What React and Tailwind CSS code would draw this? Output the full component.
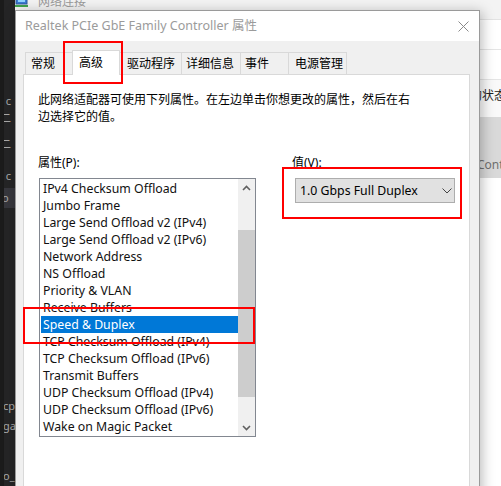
import React from "react";

const items = [
  "IPv4 Checksum Offload",
  "Jumbo Frame",
  "Large Send Offload v2 (IPv4)",
  "Large Send Offload v2 (IPv6)",
  "Network Address",
  "NS Offload",
  "Priority & VLAN",
  "Receive Buffers",
  "Speed & Duplex",
  "TCP Checksum Offload (IPv4)",
  "TCP Checksum Offload (IPv6)",
  "Transmit Buffers",
  "UDP Checksum Offload (IPv4)",
  "UDP Checksum Offload (IPv6)",
  "Wake on Magic Packet",
];

function Chevron({ up, className }) {
  return (
    <svg width="9" height="6" viewBox="0 0 9 6" className={className}>
      <path
        d={up ? "M1 5 L4.5 1.5 L8 5" : "M1 1 L4.5 4.5 L8 1"}
        fill="none"
        stroke="currentColor"
        strokeWidth="1.6"
      />
    </svg>
  );
}

function EditorStrip() {
  return (
    <div className="absolute left-0 top-0 h-full w-[15px] flex bg-[#252526] overflow-hidden">
      <div className="w-[4px] h-full bg-[#1b1b1b] shrink-0" />
      <div className="flex flex-col w-[11px] text-[11px] leading-[17px] text-[#a8a8a8] whitespace-nowrap overflow-hidden">
        <div className="h-[92px] shrink-0" />
        <div className="h-[17px] -ml-[4px]">. c</div>
        <div className="h-[17px] -ml-[4px]">二</div>
        <div className="h-[9px] shrink-0" />
        <div className="h-[17px] -ml-[4px]">二</div>
        <div className="h-[15px] shrink-0" />
        <div className="h-[17px] -ml-[4px]">. c</div>
        <div className="h-[4px] shrink-0" />
        <div className="h-[20px] -ml-[4px] bg-[#37373d] leading-[20px] w-[15px] pl-[2px]">o</div>
        <div className="h-[189px] shrink-0" />
        <div className="h-[17px] -ml-[1px]">cp</div>
        <div className="h-[3px] shrink-0" />
        <div className="h-[17px] -ml-[1px]">ga</div>
        <div className="h-[33px] shrink-0" />
        <div className="h-[17px] -ml-[1px]">o_</div>
      </div>
    </div>
  );
}

function BackWindow() {
  return (
    <div className="absolute left-[13px] top-[-14px] right-0 bottom-0 bg-white flex flex-col text-[12px]">
      <div className="h-[34px] shrink-0 bg-[#f3f3f3] border-b border-[#e3e3e3] flex items-start pt-[8px] pl-[2px] gap-[10px]">
        <svg width="13" height="12" viewBox="0 0 13 12" className="mt-[2px]">
          <rect x="1" y="1" width="11" height="7" fill="#3a7bd5" stroke="#2a5a9a" />
          <rect x="3" y="3" width="7" height="3" fill="#8fd3ff" />
          <rect x="0" y="9" width="13" height="2" fill="#3fa34d" />
        </svg>
        <span className="leading-[16px] text-[#9a9a9a]">网络连接</span>
      </div>
      <div className="h-[30px] shrink-0 border-b border-[#e5e5e5]" />
      <div className="h-[30px] shrink-0 border-b border-[#e5e5e5]" />
      <div className="h-[37px] shrink-0 bg-[#f9f9f9] pl-[457px] pt-[8px] leading-[16px] text-[#222] whitespace-nowrap">
        的状态
      </div>
      <div className="h-[61px] shrink-0 bg-[#d9d9d9] pl-[464px] pt-[40px] leading-[16px] text-[#707070] whitespace-nowrap">
        Cont
      </div>
      <div className="flex-1 bg-white" />
    </div>
  );
}

function Tab({ w, pl, selected, noLeft, right, children }) {
  if (selected) {
    return (
      <div
        className="relative z-10 h-[25px] -mb-px bg-white border-l border-t border-r border-[#d9d9d9] pt-[3px] leading-[17px] shrink-0"
        style={{ width: w, paddingLeft: pl }}
      >
        {children}
      </div>
    );
  }
  return (
    <div
      className={
        "h-[22px] bg-[#f0f0f0] border-t border-[#d9d9d9] pt-[2px] leading-[17px] shrink-0 " +
        (noLeft ? "" : "border-l ") +
        (right ? "border-r" : "")
      }
      style={{ width: w, paddingLeft: pl }}
    >
      {children}
    </div>
  );
}

function Dialog() {
  return (
    <div className="absolute left-[15px] top-[10px] w-[465px] h-[500px] border border-[#9a9a9a] bg-[#f0f0f0] flex flex-col shadow-[2px_2px_12px_rgba(0,0,0,0.28)]">
      <div className="h-[30px] shrink-0 bg-white flex items-center justify-between pl-[9px] pr-[10px]">
        <span className="text-[12.5px] text-[#9b9b9b] leading-[16px]">
          Realtek PCIe GbE Family Controller 属性
        </span>
        <svg width="11" height="11" viewBox="0 0 11 11">
          <path d="M0.5 0.5 L10.5 10.5 M10.5 0.5 L0.5 10.5" stroke="#8a8a8a" strokeWidth="1" fill="none" />
        </svg>
      </div>
      <div className="flex-1 flex flex-col pt-[9px] pl-[7px]">
        <div className="flex items-end h-[24px] ml-[2px] text-[12px] text-black">
          <Tab w={47} pl={5}>常规</Tab>
          <Tab w={48} pl={6} selected>高级</Tab>
          <Tab w={61} pl={7} noLeft>驱动程序</Tab>
          <Tab w={59} pl={4}>详细信息</Tab>
          <Tab w={48} pl={4}>事件</Tab>
          <Tab w={59} pl={6} right>电源管理</Tab>
        </div>
        <div className="w-[447px] flex-1 bg-white border border-[#d9d9d9] pl-[14px] pt-[16px] text-[12px] text-black">
          <p className="leading-[17px]">
            此网络适配器可使用下列属性。在左边单击你想更改的属性，然后在右
            <br />
            边选择它的值。
          </p>
          <div className="flex mt-[29px]">
            <div className="w-[218px] shrink-0 flex flex-col">
              <div className="leading-[17px] h-[17px]">属性(P):</div>
              <div className="ml-[1px] mt-[7px] w-[217px] h-[259px] border border-[#828790] flex">
                <div className="flex-1 flex flex-col pl-px pt-px text-[12.3px]">
                  {items.map((it) => (
                    <div
                      key={it}
                      className={
                        "h-[17px] leading-[17px] pl-[2px] whitespace-nowrap " +
                        (it === "Speed & Duplex" ? "bg-[#0078d7] text-white" : "text-[#111]")
                      }
                    >
                      {it}
                    </div>
                  ))}
                </div>
                <div className="w-[17px] shrink-0 bg-[#f0f0f0] flex flex-col text-[#606060]">
                  <div className="h-[17px] flex items-center justify-center">
                    <Chevron up />
                  </div>
                  <div className="h-[34px] shrink-0" />
                  <div className="h-[167px] shrink-0 bg-[#cdcdcd]" />
                  <div className="flex-1" />
                  <div className="h-[17px] flex items-center justify-center">
                    <Chevron />
                  </div>
                </div>
              </div>
            </div>
            <div className="ml-[36px] flex flex-col">
              <div className="leading-[17px] h-[17px]">值(V):</div>
              <div className="ml-[3px] mt-[7px] w-[160px] h-[25px] border border-[#adadad] bg-[#e1e1e1] flex items-center justify-between pl-[4px] pr-[2px]">
                <span className="leading-[17px] text-[12.3px]">1.0 Gbps Full Duplex</span>
                <svg width="10" height="6" viewBox="0 0 10 6" className="text-[#444]">
                  <path d="M0.5 0.5 L5 5 L9.5 0.5" fill="none" stroke="currentColor" strokeWidth="1" />
                </svg>
              </div>
            </div>
          </div>
        </div>
      </div>
    </div>
  );
}

export default function App() {
  return (
    <div className="relative w-[501px] h-[486px] overflow-hidden bg-[#1e1e1e] font-['Noto_Sans','Noto_Sans_CJK_SC',sans-serif] text-[12px] text-black">
      <BackWindow />
      <EditorStrip />
      <Dialog />
      <div className="absolute left-[63px] top-[41px] w-[60px] h-[43px] border-2 border-[#ff0000] z-20" />
      <div className="absolute left-[282px] top-[167px] w-[180px] h-[52px] border-2 border-[#ff0000] z-20" />
      <div className="absolute left-[23px] top-[307px] w-[232px] h-[37px] border-2 border-[#ff0000] z-20" />
    </div>
  );
}
